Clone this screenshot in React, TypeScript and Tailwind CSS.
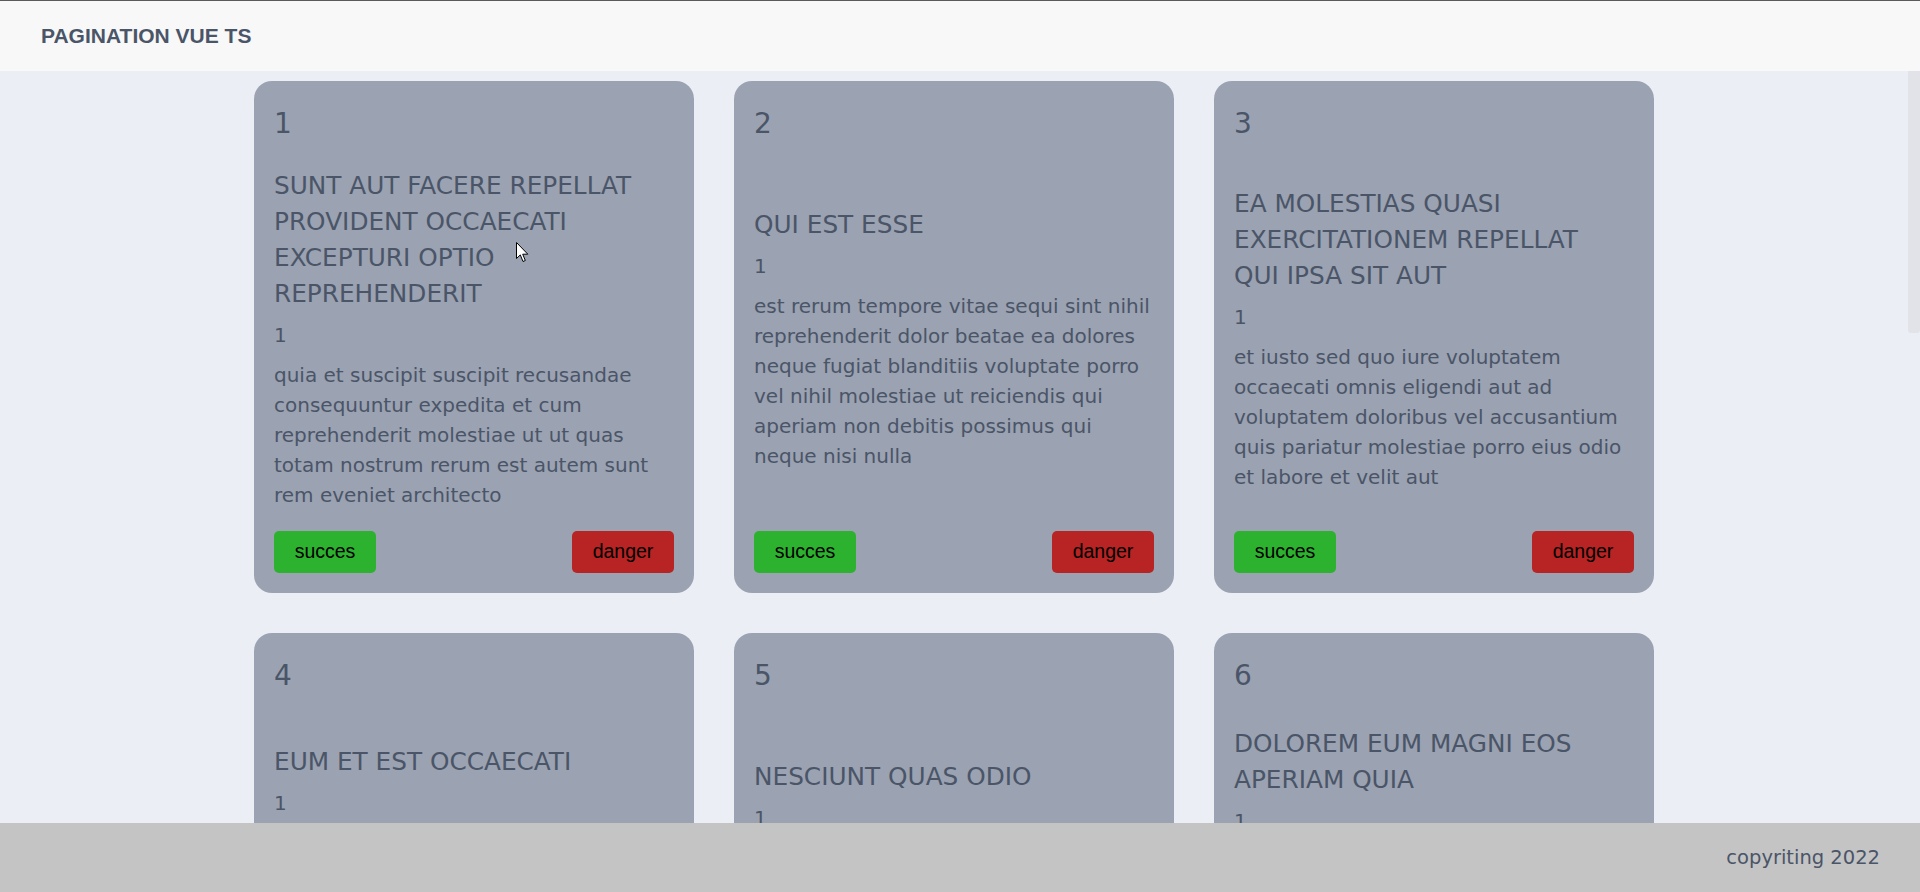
import React from "react";

type Post = {
  id: number;
  title: string[];
  userId: number;
  body: string[];
};

const posts: Post[] = [
  {
    id: 1,
    title: ["SUNT AUT FACERE REPELLAT", "PROVIDENT OCCAECATI", "EXCEPTURI OPTIO", "REPREHENDERIT"],
    userId: 1,
    body: [
      "quia et suscipit suscipit recusandae",
      "consequuntur expedita et cum",
      "reprehenderit molestiae ut ut quas",
      "totam nostrum rerum est autem sunt",
      "rem eveniet architecto",
    ],
  },
  {
    id: 2,
    title: ["QUI EST ESSE"],
    userId: 1,
    body: [
      "est rerum tempore vitae sequi sint nihil",
      "reprehenderit dolor beatae ea dolores",
      "neque fugiat blanditiis voluptate porro",
      "vel nihil molestiae ut reiciendis qui",
      "aperiam non debitis possimus qui",
      "neque nisi nulla",
    ],
  },
  {
    id: 3,
    title: ["EA MOLESTIAS QUASI", "EXERCITATIONEM REPELLAT", "QUI IPSA SIT AUT"],
    userId: 1,
    body: [
      "et iusto sed quo iure voluptatem",
      "occaecati omnis eligendi aut ad",
      "voluptatem doloribus vel accusantium",
      "quis pariatur molestiae porro eius odio",
      "et labore et velit aut",
    ],
  },
  {
    id: 4,
    title: ["EUM ET EST OCCAECATI"],
    userId: 1,
    body: [
      "ullam et saepe reiciendis",
      "voluptatem adipisci sit amet autem",
      "assumenda provident rerum culpa",
      "quis hic commodi nesciunt rem",
      "tenetur doloremque ipsam iure quis",
      "sunt voluptatem rerum illo",
      "velit",
    ],
  },
  {
    id: 5,
    title: ["NESCIUNT QUAS ODIO"],
    userId: 1,
    body: [
      "repudiandae veniam quaerat sunt",
      "sed alias aut fugiat sit autem sed",
      "est voluptatem omnis possimus",
      "esse voluptatibus quis est aut",
      "tenetur dolor",
      "neque",
    ],
  },
  {
    id: 6,
    title: ["DOLOREM EUM MAGNI EOS", "APERIAM QUIA"],
    userId: 1,
    body: [
      "ut aspernatur corporis harum nihil",
      "quis provident sequi mollitia nobis",
      "aliquid molestiae perspiciatis et",
      "ea nemo ab",
      "reprehenderit accusantium quas",
      "voluptate dolores velit et",
      "doloremque molestiae",
    ],
  },
];

function Card({ post }: { post: Post }) {
  return (
    <div className="flex h-[512px] flex-col rounded-[18px] bg-[#9ba2b1] p-5 text-[#4a5568]">
      <div className="text-[28px] leading-[45px]">{post.id}</div>
      <div className="flex flex-1 flex-col justify-center">
        <div className="mb-[8px] text-[24.75px] leading-[36px] whitespace-nowrap">
          {post.title.map((l, i) => (
            <div key={i}>{l}</div>
          ))}
        </div>
        <div className="mb-[10px] text-[20px] leading-[30px]">{post.userId}</div>
        <div className="text-[20px] leading-[30px] whitespace-nowrap">
          {post.body.map((l, i) => (
            <div key={i}>{l}</div>
          ))}
        </div>
      </div>
      <div className="flex justify-between">
        <button className="h-[42px] w-[102px] rounded-[5px] bg-[#2db22f] text-[19.5px] text-black [font-family:'Liberation_Sans',Arial,sans-serif]">
          succes
        </button>
        <button className="h-[42px] w-[102px] rounded-[5px] bg-[#b82323] text-[19.5px] text-black [font-family:'Liberation_Sans',Arial,sans-serif]">
          danger
        </button>
      </div>
    </div>
  );
}

export default function App() {
  return (
    <div className="relative flex h-[892px] w-[1920px] flex-col overflow-hidden bg-[#eceef5] [font-family:'DejaVu_Sans',sans-serif]">
      <header className="flex h-[71px] shrink-0 items-center border-t border-[#5a5a5a] bg-[#f8f8f8] pl-[41px]">
        <span className="text-[21px] font-bold text-[#4a5568] [font-family:'Liberation_Sans',Arial,sans-serif]">
          PAGINATION VUE TS
        </span>
      </header>
      <main className="flex flex-1 justify-center overflow-hidden pr-[12px] pt-[10px]">
        <div className="grid h-fit w-[1400px] grid-cols-3 gap-x-[40px] gap-y-[40px]">
          {posts.map((p) => (
            <Card key={p.id} post={p} />
          ))}
        </div>
      </main>
      <footer className="flex h-[69px] shrink-0 items-center justify-end bg-[#c4c4c4] pr-[40px]">
        <span className="text-[19.5px] text-[#4a5568]">copyriting 2022</span>
      </footer>
      <div className="absolute right-0 top-[71px] h-[262px] w-[12px] rounded-b-[3px] bg-[#e2e3e8]" />
      <svg
        className="absolute left-[516px] top-[242px]"
        width="13"
        height="21"
        viewBox="0 0 13 21"
      >
        <path
          d="M0.5 0.5 L0.5 16.5 L4.3 12.9 L7 19.5 L9.3 18.5 L6.7 12.2 L11.8 12.2 Z"
          fill="#ffffff"
          stroke="#000000"
          strokeWidth="1"
          strokeLinejoin="round"
        />
      </svg>
    </div>
  );
}
